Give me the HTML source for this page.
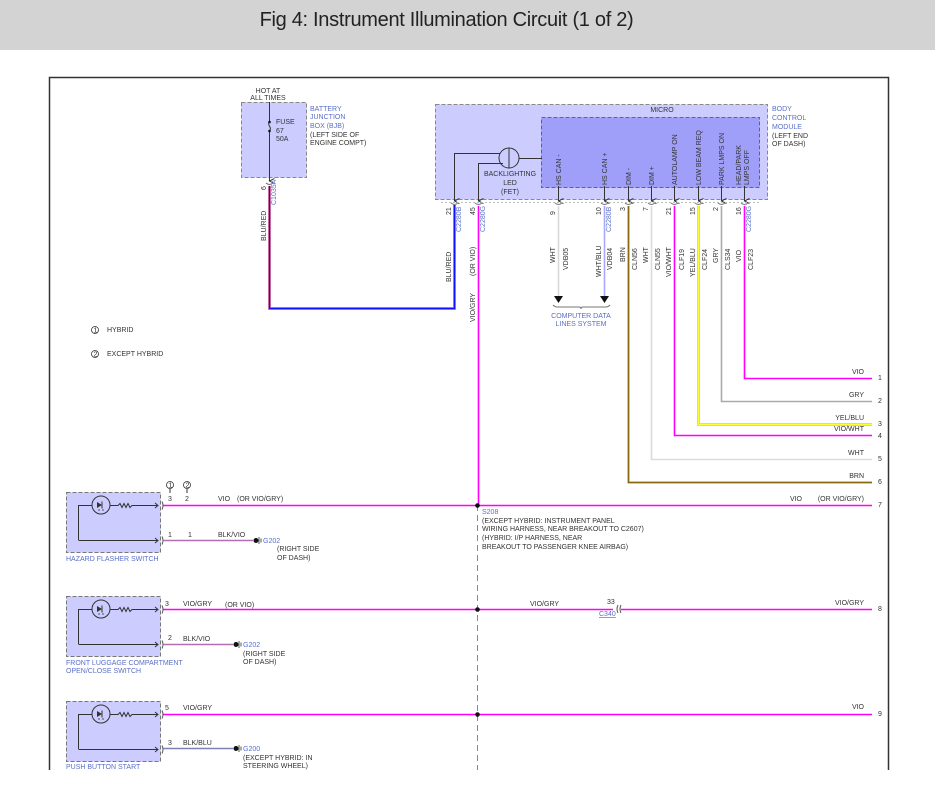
<!DOCTYPE html>
<html><head><meta charset="utf-8"><style>
html,body{margin:0;padding:0;background:#fff;width:935px;height:803px;overflow:hidden}
.hd{position:absolute;left:0;top:0;width:935px;height:50px;background:#d3d3d3}
.hd div{position:absolute;left:0;width:893px;top:9px;text-align:center;font:20px "Liberation Sans Narrow","Liberation Sans",sans-serif;color:#222;letter-spacing:-0.3px}
svg{position:absolute;left:0;top:0}
text{font-family:"Liberation Sans",sans-serif;font-size:7px;fill:#333}
.b{fill:#5a6fc8}
.o{fill:#8a5a2a}
</style></head><body>
<div class="hd"><div>Fig 4: Instrument Illumination Circuit (1 of 2)</div></div>
<svg width="935" height="803" viewBox="0 0 935 803">
<defs>
<marker id="ar" markerWidth="6" markerHeight="6" refX="3" refY="5" orient="auto" markerUnits="userSpaceOnUse"><path d="M0.5,0 L3,5 L5.5,0" fill="none" stroke="#333" stroke-width="1"/></marker>
</defs>
<!-- frame -->
<path d="M49.5,770 V77.5 H888.5 V770" fill="none" stroke="#333" stroke-width="1.5"/>

<!-- BJB -->
<text x="268" y="93" text-anchor="middle">HOT AT</text>
<text x="268" y="100" text-anchor="middle">ALL TIMES</text>
<rect x="241.5" y="102.5" width="65" height="75" fill="#ccccff" stroke="#888" stroke-dasharray="4,2"/>
<line x1="269.5" y1="102" x2="269.5" y2="121" stroke="#333"/>
<path d="M269.5,122 c-3,3 3,5 0,9" fill="none" stroke="#333"/>
<line x1="269.5" y1="132" x2="269.5" y2="181" stroke="#333" marker-end="url(#ar)"/>
<circle cx="269.5" cy="122" r="1.3" fill="#111"/><circle cx="269.5" cy="131" r="1.3" fill="#111"/>
<text x="276" y="124">FUSE</text><text x="276" y="133">67</text><text x="276" y="141">50A</text>
<text x="310" y="111" class="b">BATTERY</text><text x="310" y="119" class="b">JUNCTION</text><text x="310" y="128" class="b">BOX (BJB)</text>
<text x="310" y="137">(LEFT SIDE OF</text><text x="310" y="145">ENGINE COMPT)</text>
<path d="M266,183 q3.5,3 7,0" fill="none" stroke="#666"/>
<text transform="translate(266,190) rotate(-90)" font-size="6.5">6</text>
<text transform="translate(276,205) rotate(-90)" class="b">C1035A</text>
<text transform="translate(266,241) rotate(-90)">BLU/RED</text>
<path d="M269.5,186 V308.5 H454.5 V205" fill="none" stroke="#ff8888" stroke-width="3"/>
<path d="M269.5,186 V308.5 H454.5 V205" fill="none" stroke="#1010ff" stroke-width="1.5"/>

<!-- BCM -->
<rect x="435.5" y="104.5" width="332" height="95" fill="#ccccff" stroke="#888" stroke-dasharray="4,2"/>
<text x="662" y="112" text-anchor="middle">MICRO</text>
<rect x="541.5" y="117.5" width="218" height="70" fill="#9f9ffa" stroke="#666" stroke-dasharray="4,2"/>
<text x="772" y="111" class="b">BODY</text><text x="772" y="120" class="b">CONTROL</text><text x="772" y="129" class="b">MODULE</text>
<text x="772" y="138">(LEFT END</text><text x="772" y="146">OF DASH)</text>
<circle cx="509" cy="158" r="10" fill="none" stroke="#333"/>
<line x1="509" y1="148" x2="509" y2="168" stroke="#333"/>
<path d="M454.5,200 V153.5 H500" fill="none" stroke="#333" marker-end="none"/>
<line x1="454.5" y1="190" x2="454.5" y2="201" stroke="#333" marker-end="url(#ar)"/>
<path d="M478.5,200 V163.5 H503" fill="none" stroke="#333"/>
<line x1="478.5" y1="190" x2="478.5" y2="201" stroke="#333" marker-end="url(#ar)"/>
<line x1="519" y1="158.5" x2="542" y2="158.5" stroke="#333"/>
<text x="510" y="176" text-anchor="middle">BACKLIGHTING</text><text x="510" y="185" text-anchor="middle">LED</text><text x="510" y="194" text-anchor="middle">(FET)</text>

<g stroke="#333">
<line x1="558.5" y1="186" x2="558.5" y2="201" marker-end="url(#ar)"/>
<line x1="604.5" y1="186" x2="604.5" y2="201" marker-end="url(#ar)"/>
<line x1="628.5" y1="186" x2="628.5" y2="201" marker-end="url(#ar)"/>
<line x1="651.5" y1="186" x2="651.5" y2="201" marker-end="url(#ar)"/>
<line x1="674.5" y1="186" x2="674.5" y2="201" marker-end="url(#ar)"/>
<line x1="698.5" y1="186" x2="698.5" y2="201" marker-end="url(#ar)"/>
<line x1="721.5" y1="186" x2="721.5" y2="201" marker-end="url(#ar)"/>
<line x1="744.5" y1="186" x2="744.5" y2="201" marker-end="url(#ar)"/>
</g>
<g font-size="7.5">
<text transform="translate(561,185) rotate(-90)">HS CAN -</text>
<text transform="translate(607,185) rotate(-90)">HS CAN +</text>
<text transform="translate(631,185) rotate(-90)">DIM -</text>
<text transform="translate(654,185) rotate(-90)">DIM +</text>
<text transform="translate(677,185) rotate(-90)">AUTOLAMP ON</text>
<text transform="translate(701,185) rotate(-90)">LOW BEAM REQ</text>
<text transform="translate(724,185) rotate(-90)">PARK LMPS ON</text>
<text transform="translate(741,185) rotate(-90)">HEAD/PARK</text>
<text transform="translate(749,185) rotate(-90)">LMPS OFF</text>
</g>
<!-- connector tick marks -->
<g fill="none" stroke="#777">
<path d="M451,203 q3.5,3 7,0"/><path d="M475,203 q3.5,3 7,0"/><path d="M555,203 q3.5,3 7,0"/><path d="M601,203 q3.5,3 7,0"/><path d="M625,203 q3.5,3 7,0"/><path d="M648,203 q3.5,3 7,0"/><path d="M671,203 q3.5,3 7,0"/><path d="M695,203 q3.5,3 7,0"/><path d="M718,203 q3.5,3 7,0"/><path d="M741,203 q3.5,3 7,0"/>
<line x1="441" y1="202.5" x2="760" y2="202.5" stroke="#bbb" stroke-dasharray="2,2"/>
</g>
<g font-size="6.5">
<text transform="translate(451,215) rotate(-90)">21</text>
<text transform="translate(475,215) rotate(-90)">45</text>
<text transform="translate(555,215) rotate(-90)">9</text>
<text transform="translate(601,215) rotate(-90)">10</text>
<text transform="translate(625,211) rotate(-90)">3</text>
<text transform="translate(648,211) rotate(-90)">7</text>
<text transform="translate(671,215) rotate(-90)">21</text>
<text transform="translate(695,215) rotate(-90)">15</text>
<text transform="translate(718,211) rotate(-90)">2</text>
<text transform="translate(741,215) rotate(-90)">16</text>
</g>
<text transform="translate(461,232) rotate(-90)" class="b">C2280B</text>
<text transform="translate(485,232) rotate(-90)" class="b">C2280G</text>
<text transform="translate(611,232) rotate(-90)" class="b">C2280B</text>
<text transform="translate(751,232) rotate(-90)" class="b">C2280G</text>

<!-- BCM down wires -->
<line x1="478.5" y1="206" x2="478.5" y2="505" stroke="#ff00ff" stroke-width="1.6"/>
<text transform="translate(451,282) rotate(-90)">BLU/RED</text>
<text transform="translate(475,276) rotate(-90)">(OR VIO)</text>
<text transform="translate(475,322) rotate(-90)">VIO/GRY</text>

<line x1="558.5" y1="206" x2="558.5" y2="297" stroke="#d8d8d8" stroke-width="1.6"/>
<line x1="604.5" y1="206" x2="604.5" y2="297" stroke="#a8a8ff" stroke-width="1.6"/>
<path d="M554,296 h9 l-4.5,7 z M600,296 h9 l-4.5,7 z" fill="#111"/>
<path d="M553,305 q2,2 4,2 H579 q2,0 2,2 q0,-2 2,-2 H606 q2,0 4,-2" fill="none" stroke="#777"/>
<text x="581" y="318" text-anchor="middle" class="b">COMPUTER DATA</text>
<text x="581" y="326" text-anchor="middle" class="b">LINES SYSTEM</text>

<path d="M628.5,206 V482.5 H872" fill="none" stroke="#8a6a10" stroke-width="1.8"/>
<path d="M651.5,206 V459.5 H872" fill="none" stroke="#dcdcdc" stroke-width="1.6"/>
<path d="M674.5,206 V435.5 H872" fill="none" stroke="#ff00ff" stroke-width="1.6"/>
<path d="M698.5,206 V424.5 H872" fill="none" stroke="#aaaaee" stroke-width="2.5"/>
<path d="M698.5,206 V424.5 H872" fill="none" stroke="#ffff30" stroke-width="1.4"/>
<path d="M721.5,206 V401.5 H872" fill="none" stroke="#aaaaaa" stroke-width="1.6"/>
<path d="M744.5,206 V378.5 H872" fill="none" stroke="#ff00ff" stroke-width="1.6"/>

<g>
<text transform="translate(555,263) rotate(-90)">WHT</text>
<text transform="translate(568,270) rotate(-90)">VDB05</text>
<text transform="translate(601,277) rotate(-90)">WHT/BLU</text>
<text transform="translate(612,270) rotate(-90)">VDB04</text>
<text transform="translate(625,262) rotate(-90)">BRN</text>
<text transform="translate(637,270) rotate(-90)">CLN56</text>
<text transform="translate(648,263) rotate(-90)">WHT</text>
<text transform="translate(660,270) rotate(-90)">CLN55</text>
<text transform="translate(671,277) rotate(-90)">VIO/WHT</text>
<text transform="translate(684,270) rotate(-90)">CLF19</text>
<text transform="translate(695,277) rotate(-90)">YEL/BLU</text>
<text transform="translate(707,270) rotate(-90)">CLF24</text>
<text transform="translate(718,263) rotate(-90)">GRY</text>
<text transform="translate(730,270) rotate(-90)">CLS34</text>
<text transform="translate(741,262) rotate(-90)">VIO</text>
<text transform="translate(753,270) rotate(-90)">CLF23</text>
</g>

<g text-anchor="end">
<text x="864" y="374">VIO</text>
<text x="864" y="397">GRY</text>
<text x="864" y="420">YEL/BLU</text>
<text x="864" y="431">VIO/WHT</text>
<text x="864" y="455">WHT</text>
<text x="864" y="478">BRN</text>
<text x="864" y="501">(OR VIO/GRY)</text>
<text x="802" y="501">VIO</text>
<text x="864" y="605">VIO/GRY</text>
<text x="864" y="709">VIO</text>
</g>
<g font-size="6.5">
<text x="878" y="380">1</text><text x="878" y="403">2</text><text x="878" y="426">3</text><text x="878" y="438">4</text><text x="878" y="461">5</text><text x="878" y="484">6</text><text x="878" y="507">7</text><text x="878" y="611">8</text><text x="878" y="716">9</text>
</g>

<!-- hybrid legend -->
<circle cx="95" cy="330" r="3.5" fill="none" stroke="#333" stroke-width="0.8"/><text x="93.5" y="332.5" font-size="5">1</text>
<text x="107" y="332">HYBRID</text>
<circle cx="95" cy="354" r="3.5" fill="none" stroke="#333" stroke-width="0.8"/><text x="93.5" y="356.5" font-size="5">2</text>
<text x="107" y="356">EXCEPT HYBRID</text>

<!-- main horizontal wires -->
<line x1="163" y1="505.5" x2="872" y2="505.5" stroke="#ff00ff" stroke-width="1.6"/>
<line x1="163" y1="609.5" x2="613" y2="609.5" stroke="#ff00ff" stroke-width="1.6"/>
<line x1="621" y1="609.5" x2="872" y2="609.5" stroke="#ff00ff" stroke-width="1.6"/>
<line x1="163" y1="714.5" x2="872" y2="714.5" stroke="#ff00ff" stroke-width="1.6"/>
<line x1="477.5" y1="505" x2="477.5" y2="770" stroke="#888" stroke-dasharray="6,4"/>
<circle cx="477.5" cy="505.5" r="2.3" fill="#111"/>
<circle cx="477.5" cy="609.5" r="2.3" fill="#111"/>
<circle cx="477.5" cy="714.5" r="2.3" fill="#111"/>
<text x="482" y="514" class="b">S208</text>
<text x="482" y="523">(EXCEPT HYBRID: INSTRUMENT PANEL</text>
<text x="482" y="531">WIRING HARNESS, NEAR BREAKOUT TO C2607)</text>
<text x="482" y="540">(HYBRID: I/P HARNESS, NEAR</text>
<text x="482" y="549">BREAKOUT TO PASSENGER KNEE AIRBAG)</text>
<text x="530" y="606">VIO/GRY</text>
<text x="607" y="604" font-size="6.5">33</text>
<text x="599" y="616" class="b" text-decoration="underline">C340</text>
<path d="M618,605 q-2,4 0,8 M621,605 q-2,4 0,8" fill="none" stroke="#555"/>

<!-- switches -->
<g id="sw">
<rect x="66.5" y="492.5" width="94" height="60" fill="#ccccff" stroke="#777" stroke-dasharray="4,2"/>
<circle cx="101" cy="505" r="9" fill="none" stroke="#333"/>
<path d="M97,502 l5,3 l-5,3 z" fill="#333"/><line x1="102" y1="501.5" x2="102" y2="508.5" stroke="#333"/>
<path d="M99,509 v2 M103,509 v2" stroke="#333" stroke-width="0.8"/>
<path d="M78.5,540 V505.5 H92 M110,505.5 H118 l2,-2 l2,4 l2,-4 l2,4 l2,-4 l2,4 l2,-2 H157" fill="none" stroke="#333"/>
<path d="M78.5,540.5 H157" fill="none" stroke="#333"/>
<path d="M155,503 l3,2.5 l-3,2.5 M155,538 l3,2.5 l-3,2.5" fill="none" stroke="#333"/>
<path d="M162,501.5 q2,4 0,8 M162,536.5 q2,4 0,8" fill="none" stroke="#555"/>
</g>
<use href="#sw" y="104"/>
<use href="#sw" y="209"/>

<text x="66" y="561" class="b">HAZARD FLASHER SWITCH</text>
<text x="66" y="665" class="b">FRONT LUGGAGE COMPARTMENT</text>
<text x="66" y="673" class="b">OPEN/CLOSE SWITCH</text>
<text x="66" y="769" class="b">PUSH BUTTON START</text>

<!-- hazard pins -->
<circle cx="170" cy="485" r="3.5" fill="none" stroke="#333" stroke-width="0.8"/><text x="168.5" y="487.5" font-size="5">1</text>
<circle cx="187" cy="485" r="3.5" fill="none" stroke="#333" stroke-width="0.8"/><text x="185.5" y="487.5" font-size="5">2</text>
<path d="M170,489 v4 M187,489 v4" stroke="#333"/>
<text x="168" y="501" font-size="6.5">3</text><text x="185" y="501" font-size="6.5">2</text>
<text x="218" y="501">VIO</text><text x="237" y="501">(OR VIO/GRY)</text>
<line x1="163" y1="540.5" x2="253" y2="540.5" stroke="#b070b0" stroke-width="1.6"/>
<text x="168" y="537" font-size="6.5">1</text><text x="188" y="537" font-size="6.5">1</text>
<text x="218" y="537">BLK/VIO</text>
<circle cx="256" cy="540.5" r="2.5" fill="#111"/><path d="M259,537 v7 M261,538.5 v4" stroke="#555"/>
<text x="263" y="543" class="b">G202</text>
<text x="277" y="551">(RIGHT SIDE</text><text x="277" y="560">OF DASH)</text>

<text x="165" y="606" font-size="6.5">3</text>
<text x="183" y="606">VIO/GRY</text><text x="225" y="607">(OR VIO)</text>
<line x1="163" y1="644.5" x2="233" y2="644.5" stroke="#b070b0" stroke-width="1.6"/>
<text x="168" y="640" font-size="6.5">2</text>
<text x="183" y="641">BLK/VIO</text>
<circle cx="236" cy="644.5" r="2.5" fill="#111"/><path d="M239,641 v7 M241,642.5 v4" stroke="#555"/>
<text x="243" y="647" class="b">G202</text>
<text x="243" y="656">(RIGHT SIDE</text><text x="243" y="664">OF DASH)</text>

<text x="165" y="710" font-size="6.5">5</text>
<text x="183" y="710">VIO/GRY</text>
<line x1="163" y1="748.5" x2="233" y2="748.5" stroke="#8080b8" stroke-width="1.6"/>
<text x="168" y="745" font-size="6.5">3</text>
<text x="183" y="745">BLK/BLU</text>
<circle cx="236" cy="748.5" r="2.5" fill="#111"/><path d="M239,745 v7 M241,746.5 v4" stroke="#555"/>
<text x="243" y="751" class="b">G200</text>
<text x="243" y="760">(EXCEPT HYBRID: IN</text><text x="243" y="768">STEERING WHEEL)</text>
</svg>
</body></html>
